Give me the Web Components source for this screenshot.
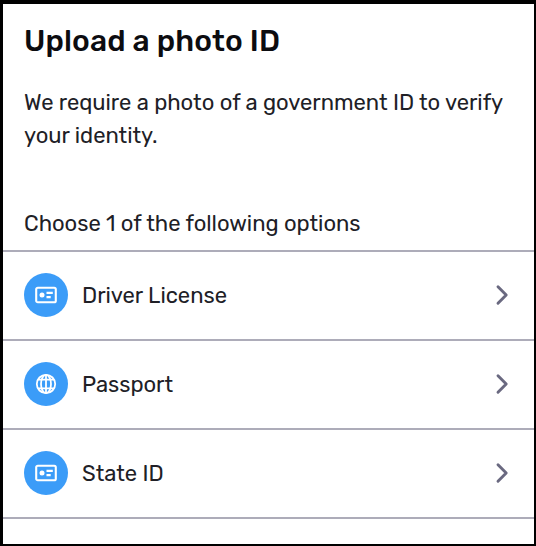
<!DOCTYPE html>
<html lang="en">
<head>
<meta charset="utf-8">
<title>Upload a photo ID</title>
<style>
  html, body {
    height: 100%;
    margin: 0;
  }
  body {
    font-family: Rubik, Roboto, "Liberation Sans", sans-serif;
    font-size: 22px;
    letter-spacing: -.02px;
    color: #202026;
  }
</style>
</head>
<body>
<id-upload-panel>
  <span slot="title">Upload a photo ID</span>
  <span slot="description">We require a photo of a government ID to verify your identity.</span>
  <span slot="prompt">Choose 1 of the following options</span>
  <id-option icon="card">Driver License</id-option>
  <id-option icon="globe">Passport</id-option>
  <id-option icon="card">State ID</id-option>
</id-upload-panel>

<script>
const ICONS = {
  card: `
    <rect x="1.2" y="3.7" width="19.6" height="14.6" rx="1.6" stroke-width="2.1"/>
    <circle cx="7" cy="11" r="2.5" fill="#fff" stroke="none"/>
    <path d="M11.5 8.9h6.3M11.5 13.1h4.2" stroke-width="2.1"/>`,
  globe: `
    <circle cx="11" cy="11" r="9.2"/>
    <ellipse cx="11" cy="11" rx="5" ry="9.2"/>
    <path d="M11 1.8v18.4M3.2 6.6h15.6M3.2 15.4h15.6"/>`
};

class IdIcon extends HTMLElement {
  constructor() {
    super();
    this.attachShadow({ mode: 'open' });
  }

  connectedCallback() {
    this.shadowRoot.innerHTML = `
      <style>
        :host {
          display: flex;
          flex: none;
          align-items: center;
          justify-content: center;
          width: 44px;
          height: 44px;
          border-radius: 50%;
          background: #3b9cf8;
        }
      </style>
      <svg width="22" height="22" viewBox="0 0 22 22" fill="none" stroke="#fff" stroke-width="1.8">
        ${ICONS[this.getAttribute('name')]}
      </svg>
    `;
  }
}

class IdOption extends HTMLElement {
  constructor() {
    super();
    this.attachShadow({ mode: 'open' });
  }

  connectedCallback() {
    this.shadowRoot.innerHTML = `
      <style>
        :host {
          display: flex;
          align-items: center;
          box-sizing: border-box;
          height: 89px;
          padding: 0 25px 1px 21px;
          border-bottom: 2px solid #adacb9;
          cursor: pointer;
        }
        .label {
          flex: 1;
          margin-left: 14px;
          padding-top: 2px;
          line-height: 32px;
        }
      </style>
      <id-icon name="${this.getAttribute('icon')}"></id-icon>
      <span class="label"><slot></slot></span>
      <svg width="14" height="22" viewBox="0 0 14 22" fill="none" stroke="#6a6980" stroke-width="2.9" stroke-linecap="round" stroke-linejoin="round">
        <path d="M3 2.7 11.2 11 3 19.3"/>
      </svg>
    `;
  }
}

class IdUploadPanel extends HTMLElement {
  constructor() {
    super();
    this.attachShadow({ mode: 'open' });
    this.shadowRoot.innerHTML = `
      <style>
        :host {
          display: block;
          box-sizing: border-box;
          height: 100%;
          border: solid #000;
          border-width: 4px 2px 2px 3px;
          background: #fff;
        }
        h1, p {
          margin: 0;
          padding: 0 21px;
        }
        h1 {
          padding-top: 17px;
          font-size: 30px;
          line-height: 40px;
          font-weight: 500;
          letter-spacing: .1px;
          color: #0c0c10;
        }
        .description {
          padding-top: 25px;
          line-height: 33px;
        }
        .prompt {
          padding-top: 54px;
          line-height: 36px;
        }
        .options {
          margin-top: 8px;
          border-top: 2px solid #adacb9;
        }
      </style>
      <h1><slot name="title"></slot></h1>
      <p class="description"><slot name="description"></slot></p>
      <p class="prompt"><slot name="prompt"></slot></p>
      <div class="options"><slot></slot></div>
    `;
  }
}

customElements.define('id-icon', IdIcon);
customElements.define('id-option', IdOption);
customElements.define('id-upload-panel', IdUploadPanel);
</script>
</body>
</html>
